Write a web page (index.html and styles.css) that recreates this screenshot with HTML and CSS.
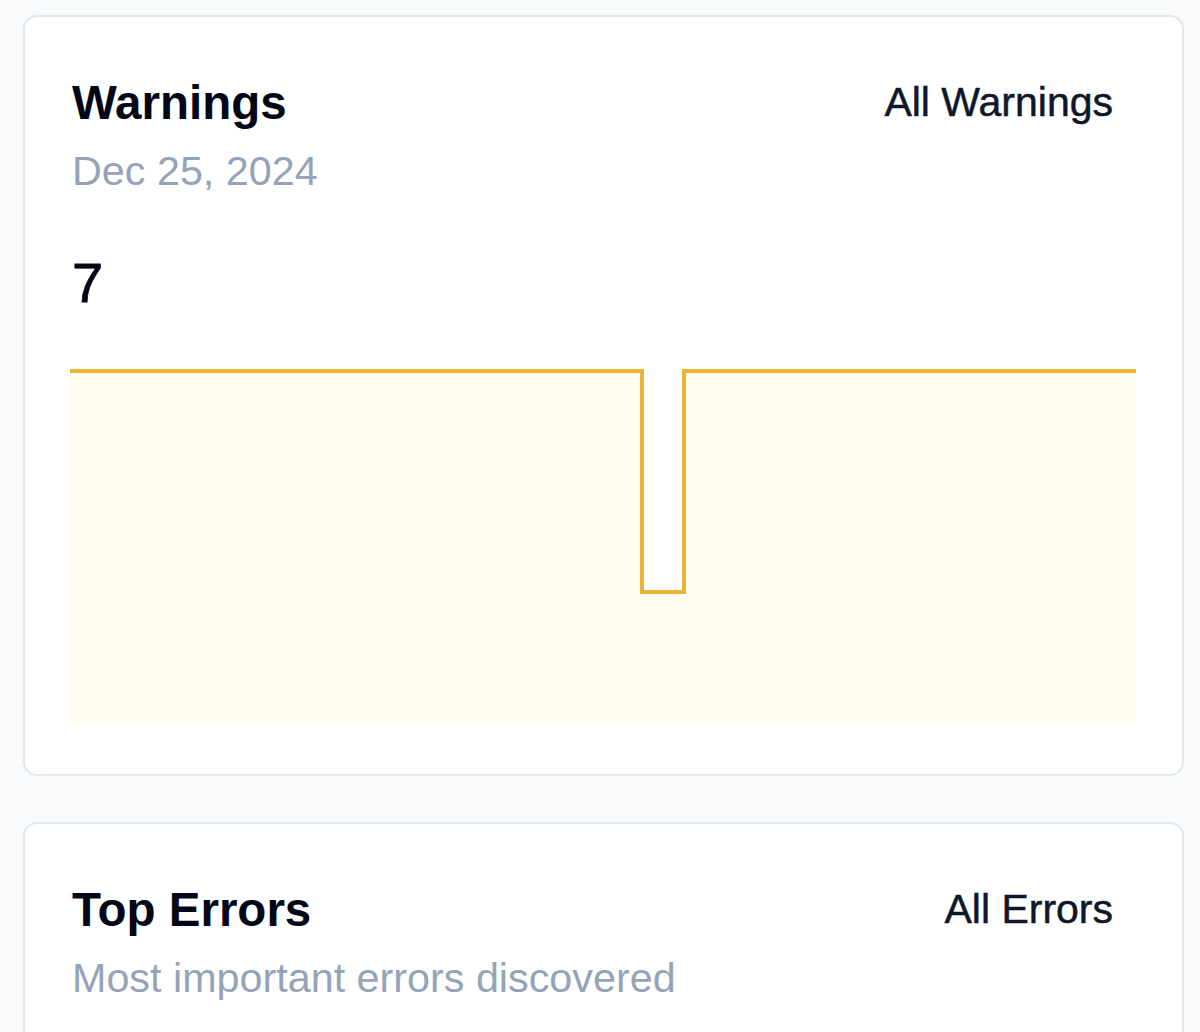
FILE: index.html
```html
<!DOCTYPE html>
<html lang="en">
<head>
<meta charset="utf-8">
<title>Dashboard</title>
<link rel="stylesheet" href="styles.css">
</head>
<body>
<main class="page">
  <section class="card">
    <header class="card-head">
      <div class="head-text">
        <h2 class="card-title">Warnings</h2>
        <p class="card-sub">Dec 25, 2024</p>
      </div>
      <a class="card-link" href="#">All Warnings</a>
    </header>
    <div class="metric">7</div>
    <svg class="chart" viewBox="0 0 1066 358" preserveAspectRatio="none" aria-hidden="true">
      <path class="chart-area" d="M0 4 H572 V225 H614 V4 H1066 V358 H0 Z"/>
      <path class="chart-line" d="M0 4 H572 V225 H614 V4 H1066"/>
    </svg>
  </section>
  <section class="card card-errors">
    <header class="card-head">
      <div class="head-text">
        <h2 class="card-title">Top Errors</h2>
        <p class="card-sub">Most important errors discovered</p>
      </div>
      <a class="card-link" href="#">All Errors</a>
    </header>
  </section>
</main>
</body>
</html>
```
FILE: styles.css
```css
html, body {
  margin: 0;
  padding: 0;
  background: #f8fafc;
}
body {
  font-family: "Liberation Sans", Arial, sans-serif;
  color: #020617;
}
.page {
  display: flex;
  flex-direction: column;
  gap: 46px;
  padding: 15px 16px 0 23px;
}
.card {
  background: #ffffff;
  border: 2px solid #e2e8f0;
  border-radius: 14px;
  padding: 58px 46px 49px 47px;
}
.card-errors {
  min-height: 400px;
}
.card-head {
  display: flex;
  justify-content: space-between;
  align-items: flex-start;
}
.card-title {
  margin: 0;
  font-size: 47.5px;
  line-height: 56px;
  font-weight: 700;
  color: #020617;
}
.card-sub {
  margin: 16px 0 0;
  font-size: 41.3px;
  line-height: 48px;
  color: #94a3b8;
}
.card-link {
  margin-top: 3px;
  margin-right: 23px;
  font-size: 41px;
  line-height: 48px;
  color: #0f172a;
  text-decoration: none;
  -webkit-text-stroke: 0.5px #0f172a;
}
.metric {
  margin-top: 56px;
  font-size: 56px;
  line-height: 64px;
  color: #020617;
  -webkit-text-stroke: 0.8px #020617;
}
.chart {
  display: block;
  width: calc(100% + 2px);
  height: 358px;
  margin: 52px 0 0 -2px;
}
.chart-area {
  fill: #fffcf0;
}
.chart-line {
  fill: none;
  stroke: #ebb434;
  stroke-width: 4;
}
```
